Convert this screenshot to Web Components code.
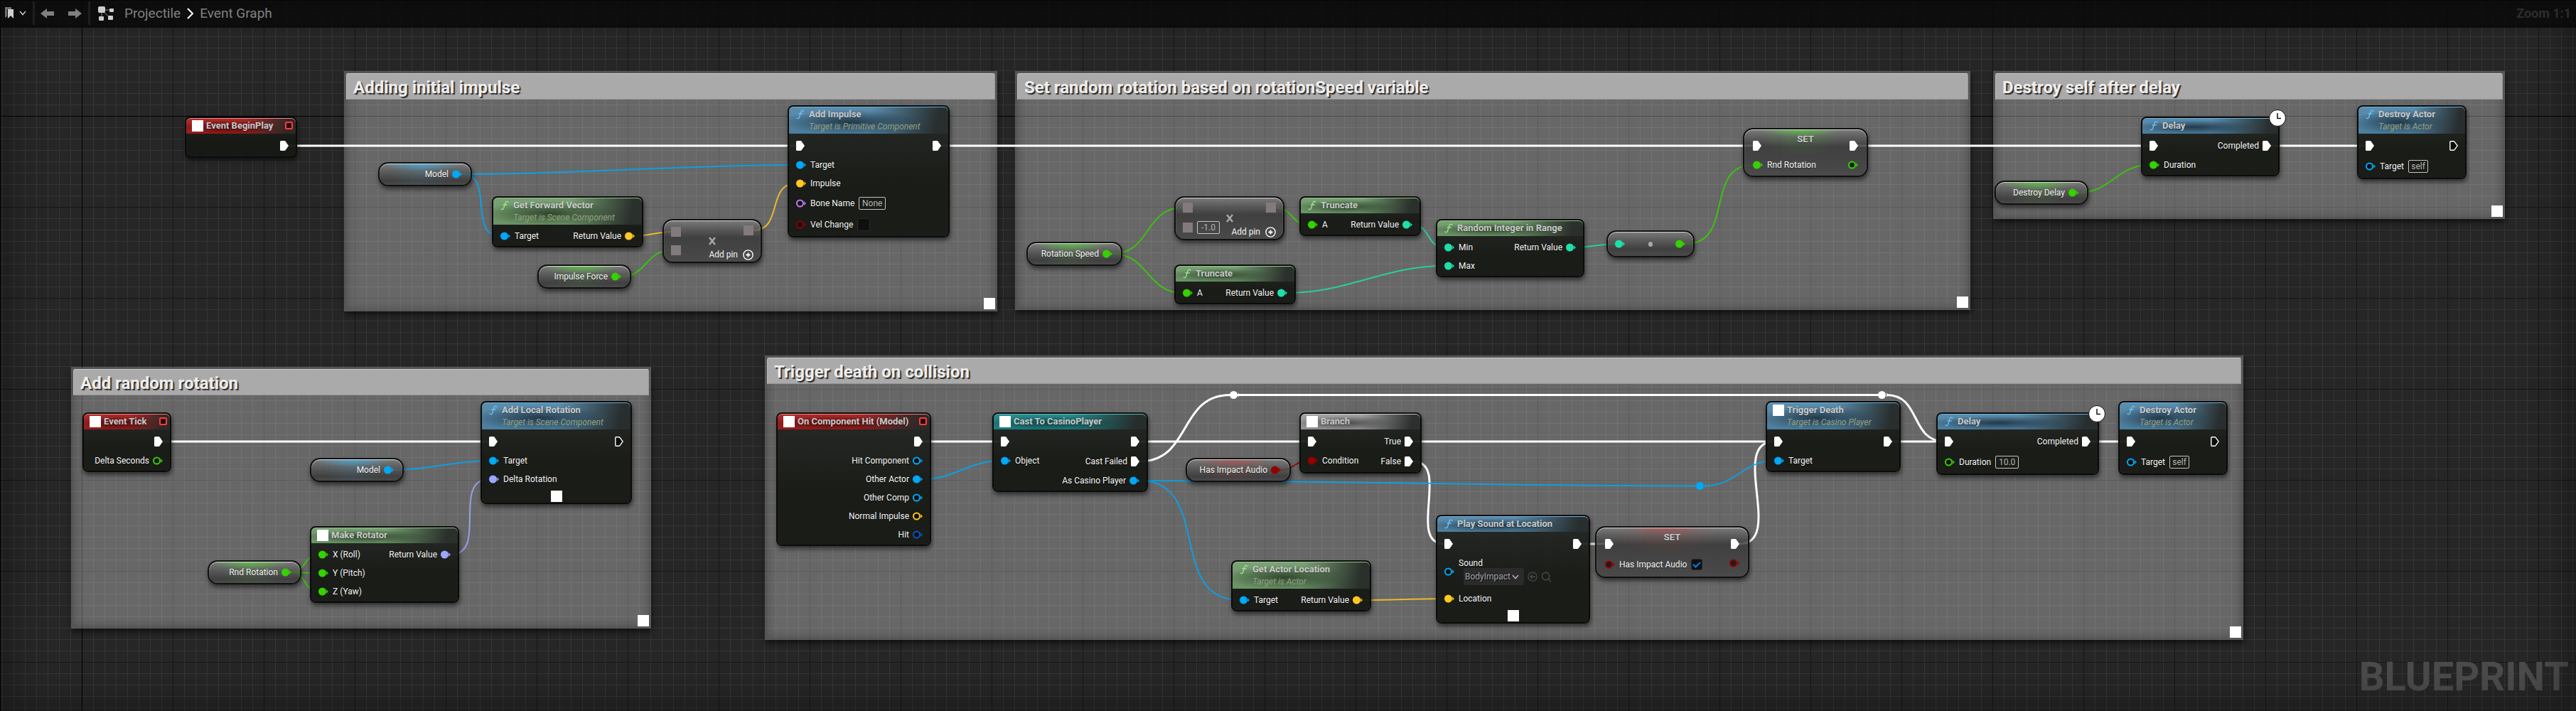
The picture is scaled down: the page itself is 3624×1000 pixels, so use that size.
<!DOCTYPE html>
<html lang="en">
<head>
<meta charset="utf-8">
<title>Projectile - Event Graph</title>
<style>
  html, body { margin: 0; height: 100%; }
  body { background: #262626; color: #f0f0f0; font: 12px/14px Roboto, "Liberation Sans", sans-serif; overflow: hidden; }
</style>
</head>
<body>

<bp-editor>
  <bp-toolbar slot="bar"></bp-toolbar>

  <bp-comment heading="Adding initial impulse" style="left:484px;top:100px;width:919px;height:338px"></bp-comment>
  <bp-comment heading="Set random rotation based on rotationSpeed variable" style="left:1428px;top:100px;width:1344px;height:336px"></bp-comment>
  <bp-comment heading="Destroy self after delay" style="left:2804px;top:100px;width:720px;height:208px"></bp-comment>
  <bp-comment heading="Add random rotation" style="left:100px;top:516px;width:816px;height:368px"></bp-comment>
  <bp-comment heading="Trigger death on collision" style="left:1076px;top:500px;width:2080px;height:400px"></bp-comment>

  <bp-wires></bp-wires>

  <bp-knot tone="exec" style="left:1730px;top:549px"></bp-knot>
  <bp-knot tone="exec" style="left:2642px;top:549px"></bp-knot>
  <bp-knot tone="object" style="left:2386px;top:677px"></bp-knot>

  <bp-node tone="red" icon="square" delegate heading="Event BeginPlay" style="left:260px;top:164px;width:158px">
    <bp-pin slot="out" type="exec" linked></bp-pin>
  </bp-node>

  <bp-getter tone="object" style="left:532px;top:228px;width:132px"><bp-pin slot="out" type="object" linked>Model</bp-pin></bp-getter>

  <bp-node tone="green" icon="fn" heading="Get Forward Vector" sub="Target is Scene Component" style="left:692px;top:276px;width:213px">
    <bp-pin slot="in" type="object" linked>Target</bp-pin>
    <bp-pin slot="out" type="vector" linked>Return Value</bp-pin>
  </bp-node>

  <bp-getter tone="float" style="left:756px;top:372px;width:132px"><bp-pin slot="out" type="float" linked>Impulse Force</bp-pin></bp-getter>

  <bp-operator style="left:932px;top:308px;width:140px">
    <bp-pin slot="in" type="wild"></bp-pin>
    <bp-pin slot="in" type="wild"></bp-pin>
    <bp-pin slot="out" type="wild"></bp-pin>
  </bp-operator>

  <bp-node tone="blue" icon="fn" heading="Add Impulse" sub="Target is Primitive Component" style="left:1108px;top:148px;width:228px">
    <bp-pin slot="in" type="exec" linked></bp-pin>
    <bp-pin slot="in" type="object" linked>Target</bp-pin>
    <bp-pin slot="in" type="vector" linked>Impulse</bp-pin>
    <bp-pin slot="in" type="name" field="None" size="38">Bone Name</bp-pin>
    <bp-pin slot="in" type="bool" check="18">Vel Change</bp-pin>
    <bp-pin slot="out" type="exec" linked></bp-pin>
  </bp-node>

  <bp-getter tone="float" style="left:1444px;top:340px;width:135px"><bp-pin slot="out" type="float" linked>Rotation Speed</bp-pin></bp-getter>

  <bp-operator style="left:1652px;top:276px;width:155px">
    <bp-pin slot="in" type="wild"></bp-pin>
    <bp-pin slot="in" type="wild" field="-1.0" size="32"></bp-pin>
    <bp-pin slot="out" type="wild"></bp-pin>
  </bp-operator>

  <bp-node tone="green" icon="fn" heading="Truncate" style="left:1828px;top:276px;width:171px">
    <bp-pin slot="in" type="float" linked>A</bp-pin>
    <bp-pin slot="out" type="int" linked>Return Value</bp-pin>
  </bp-node>
  <bp-node tone="green" icon="fn" heading="Truncate" style="left:1652px;top:372px;width:171px">
    <bp-pin slot="in" type="float" linked>A</bp-pin>
    <bp-pin slot="out" type="int" linked>Return Value</bp-pin>
  </bp-node>

  <bp-node tone="green" icon="fn" heading="Random Integer in Range" style="left:2020px;top:308px;width:209px">
    <bp-pin slot="in" type="int" linked>Min</bp-pin>
    <bp-pin slot="in" type="int" linked>Max</bp-pin>
    <bp-pin slot="out" type="int" linked>Return Value</bp-pin>
  </bp-node>

  <bp-convert style="left:2260px;top:324px;width:124px">
    <bp-pin slot="in" type="int" linked></bp-pin>
    <bp-pin slot="out" type="float" linked></bp-pin>
  </bp-convert>

  <bp-setter tone="float" style="left:2452px;top:180px;width:176px">
    <bp-pin slot="in" type="exec" linked></bp-pin>
    <bp-pin slot="in" type="float" linked>Rnd Rotation</bp-pin>
    <bp-pin slot="out" type="exec" linked></bp-pin>
    <bp-pin slot="out" type="float"></bp-pin>
  </bp-setter>

  <bp-getter tone="float" style="left:2806px;top:254px;width:132px"><bp-pin slot="out" type="float" linked>Destroy Delay</bp-pin></bp-getter>

  <bp-node tone="blue" icon="fn" latent heading="Delay" style="left:3012px;top:164px;width:195px">
    <bp-pin slot="in" type="exec" linked></bp-pin>
    <bp-pin slot="in" type="float" linked>Duration</bp-pin>
    <bp-pin slot="out" type="exec" linked>Completed</bp-pin>
  </bp-node>

  <bp-node tone="blue" icon="fn" heading="Destroy Actor" sub="Target is Actor" style="left:3316px;top:148px;width:154px">
    <bp-pin slot="in" type="exec" linked></bp-pin>
    <bp-pin slot="in" type="object" field="self" size="28">Target</bp-pin>
    <bp-pin slot="out" type="exec"></bp-pin>
  </bp-node>

  <bp-node tone="red" icon="square" delegate heading="Event Tick" style="left:116px;top:580px;width:125px">
    <bp-pin slot="out" type="exec" linked></bp-pin>
    <bp-pin slot="out" type="float">Delta Seconds</bp-pin>
  </bp-node>

  <bp-getter tone="object" style="left:436px;top:644px;width:132px"><bp-pin slot="out" type="object" linked>Model</bp-pin></bp-getter>
  <bp-getter tone="float" style="left:292px;top:788px;width:132px"><bp-pin slot="out" type="float" linked>Rnd Rotation</bp-pin></bp-getter>

  <bp-node tone="green" icon="square" heading="Make Rotator" style="left:436px;top:740px;width:210px">
    <bp-pin slot="in" type="float" linked>X (Roll)</bp-pin>
    <bp-pin slot="in" type="float" linked>Y (Pitch)</bp-pin>
    <bp-pin slot="in" type="float" linked>Z (Yaw)</bp-pin>
    <bp-pin slot="out" type="rotator" linked>Return Value</bp-pin>
  </bp-node>

  <bp-node tone="blue" icon="fn" expand heading="Add Local Rotation" sub="Target is Scene Component" style="left:676px;top:564px;width:213px">
    <bp-pin slot="in" type="exec" linked></bp-pin>
    <bp-pin slot="in" type="object" linked>Target</bp-pin>
    <bp-pin slot="in" type="rotator" linked>Delta Rotation</bp-pin>
    <bp-pin slot="out" type="exec"></bp-pin>
  </bp-node>

  <bp-node tone="red" icon="square" delegate heading="On Component Hit (Model)" style="left:1092px;top:580px;width:218px">
    <bp-pin slot="out" type="exec" linked></bp-pin>
    <bp-pin slot="out" type="object">Hit Component</bp-pin>
    <bp-pin slot="out" type="object" linked>Other Actor</bp-pin>
    <bp-pin slot="out" type="object">Other Comp</bp-pin>
    <bp-pin slot="out" type="vector">Normal Impulse</bp-pin>
    <bp-pin slot="out" type="struct">Hit</bp-pin>
  </bp-node>

  <bp-node tone="teal" icon="square" heading="Cast To CasinoPlayer" style="left:1396px;top:580px;width:219px">
    <bp-pin slot="in" type="exec" linked></bp-pin>
    <bp-pin slot="in" type="object" linked>Object</bp-pin>
    <bp-pin slot="out" type="exec" linked></bp-pin>
    <bp-pin slot="out" type="exec" linked>Cast Failed</bp-pin>
    <bp-pin slot="out" type="object" linked>As Casino Player</bp-pin>
  </bp-node>

  <bp-getter tone="bool" style="left:1668px;top:644px;width:148px"><bp-pin slot="out" type="bool" linked>Has Impact Audio</bp-pin></bp-getter>

  <bp-node tone="gray" icon="square" heading="Branch" style="left:1828px;top:580px;width:172px">
    <bp-pin slot="in" type="exec" linked></bp-pin>
    <bp-pin slot="in" type="bool" linked>Condition</bp-pin>
    <bp-pin slot="out" type="exec" linked>True</bp-pin>
    <bp-pin slot="out" type="exec" linked>False</bp-pin>
  </bp-node>

  <bp-node tone="green" icon="fn" heading="Get Actor Location" sub="Target is Actor" style="left:1732px;top:788px;width:197px">
    <bp-pin slot="in" type="object" linked>Target</bp-pin>
    <bp-pin slot="out" type="vector" linked>Return Value</bp-pin>
  </bp-node>

  <bp-node tone="blue" icon="fn" expand heading="Play Sound at Location" style="left:2020px;top:724px;width:217px">
    <bp-pin slot="in" type="exec" linked></bp-pin>
    <bp-pin slot="in" type="object" asset="BodyImpact">Sound</bp-pin>
    <bp-pin slot="in" type="vector" linked>Location</bp-pin>
    <bp-pin slot="out" type="exec" linked></bp-pin>
  </bp-node>

  <bp-setter tone="bool" style="left:2244px;top:740px;width:217px">
    <bp-pin slot="in" type="exec" linked></bp-pin>
    <bp-pin slot="in" type="bool" check="16" on>Has Impact Audio</bp-pin>
    <bp-pin slot="out" type="exec" linked></bp-pin>
    <bp-pin slot="out" type="bool"></bp-pin>
  </bp-setter>

  <bp-node tone="blue" icon="square" heading="Trigger Death" sub="Target is Casino Player" style="left:2484px;top:564px;width:190px">
    <bp-pin slot="in" type="exec" linked></bp-pin>
    <bp-pin slot="in" type="object" linked>Target</bp-pin>
    <bp-pin slot="out" type="exec" linked></bp-pin>
  </bp-node>

  <bp-node tone="blue" icon="fn" latent heading="Delay" style="left:2724px;top:580px;width:229px">
    <bp-pin slot="in" type="exec" linked></bp-pin>
    <bp-pin slot="in" type="float" field="10.0" size="33">Duration</bp-pin>
    <bp-pin slot="out" type="exec" linked>Completed</bp-pin>
  </bp-node>

  <bp-node tone="blue" icon="fn" heading="Destroy Actor" sub="Target is Actor" style="left:2980px;top:564px;width:154px">
    <bp-pin slot="in" type="exec" linked></bp-pin>
    <bp-pin slot="in" type="object" field="self" size="28">Target</bp-pin>
    <bp-pin slot="out" type="exec"></bp-pin>
  </bp-node>
</bp-editor>

<script>
const COLORS = {
  exec: '#ffffff', object: '#00a8f6', vector: '#ffc823', float: '#35d100', int: '#1fdfa8',
  bool: '#940000', rotator: '#9ba8ff', name: '#c67bff', struct: '#0058c8', wild: '#837b7b'
};

class BpElement extends HTMLElement {
  connectedCallback() {
    if (this.shadowRoot) return;
    this.attachShadow({ mode: 'open' }).innerHTML =
      `<style>*{box-sizing:border-box}${this.css()}</style>${this.html()}`;
  }
  css() { return ''; }
  html() { return ''; }
}

/* Canvas with the ruled background: 16px cells, heavier rules each 8 cells, black axes through the origin */
class BpEditor extends BpElement {
  css() { return `
    :host { display: block; position: relative; min-height: 100vh; overflow: hidden;
      background-color: #262626;
      background-image:
        linear-gradient(90deg, #000 1px, transparent 1px), linear-gradient(#000 1px, transparent 1px),
        linear-gradient(90deg, #161616 1px, transparent 1px), linear-gradient(#161616 1px, transparent 1px),
        linear-gradient(90deg, #353535 1px, transparent 1px), linear-gradient(#353535 1px, transparent 1px);
      background-size: 100% 100%, 100% 100%, 128px 128px, 128px 128px, 16px 16px, 16px 16px;
      background-repeat: no-repeat, no-repeat, repeat, repeat, repeat, repeat;
      background-position: 0 0, 0 0, 115px 35px, 115px 35px, 3px 3px, 3px 3px;
      background-origin: padding-box; }
    .axis { position: absolute; background: #000; }
    .ax { left: 0; right: 0; top: 163px; height: 1px; }
    .ay { top: 0; bottom: 0; left: 115px; width: 1px; }
    .mark { position: absolute; right: 10px; bottom: 15px; font: bold 56px/66px Roboto, sans-serif; color: #4b4b4b; }
    .vignette { position: absolute; inset: 0; pointer-events: none; box-shadow: inset 0 0 60px rgba(0,0,0,.45); }`; }
  html() { return `<div class="axis ax"></div><div class="axis ay"></div><slot></slot><div class="mark">BLUEPRINT</div><div class="vignette"></div><slot name="bar"></slot>`; }
}
customElements.define('bp-editor', BpEditor);

class BpToolbar extends BpElement {
  css() { return `
    :host { position: absolute; top: 0; left: 0; right: 0; height: 37px; display: flex; align-items: center;
      padding: 0 7px; background: rgba(8,8,8,.78); border-bottom: 2px solid #0b0b0b; font-size: 19px; line-height: 24px; }
    button { all: unset; display: flex; align-items: center; }
    .marks { gap: 8px; width: 39px; height: 100%; }
    i { width: 3px; height: 33px; background: #1e1e1e; }
    .nav { display: flex; gap: 20px; padding: 0 9px 0 8px; }
    nav { display: flex; align-items: center; gap: 9px; padding-left: 11px; flex: 1; }
    nav > svg:first-child { margin-right: 6px; }
    a { color: #808080; text-decoration: none; }
    .zoom { font-weight: bold; font-size: 18px; color: #2d2d2d; }`; }
  html() { return `
    <button class="marks" aria-label="Bookmarks">
      <svg width="12" height="17"><path d="M0 0H9V3H3V13L0 15Z" fill="#6e6e6e"/><path d="M4 3H12V16L8 12L4 16Z" fill="#cfcfcf"/></svg>
      <svg width="10" height="7"><path d="M1 1L5 5.500L9 1" fill="none" stroke="#c8c8c8" stroke-width="1.500"/></svg>
    </button><i></i>
    <div class="nav">
      <button aria-label="Back"><svg width="19" height="16"><path d="M0 8L9 1V5H19V11H9V15Z" fill="#808080"/></svg></button>
      <button aria-label="Forward"><svg width="19" height="16"><path d="M19 8L10 1V5H0V11H10V15Z" fill="#808080"/></svg></button>
    </div><i></i>
    <nav aria-label="Breadcrumb">
      <svg width="22" height="20"><path d="M5 5V17M5 5H18M5 5L17 16" stroke="#8a8a8a" fill="none"/><g fill="#cdcdcd"><rect width="10" height="9" rx="2"/><rect x="16" y="3" width="6" height="5" rx="1"/><rect x="1" y="14" width="7" height="6" rx="1"/><rect x="14" y="13" width="7" height="6" rx="1"/></g></svg>
      <a href="#projectile">Projectile</a>
      <svg width="9" height="16"><path d="M1 1L8 8L1 15" fill="none" stroke="#fff" stroke-width="2"/></svg>
      <a href="#graph">Event Graph</a>
    </nav>
    <span class="zoom">Zoom 1:1</span>`; }
}
customElements.define('bp-toolbar', BpToolbar);

class BpComment extends BpElement {
  css() { return `
    :host { position: absolute; display: flex; flex-direction: column; justify-content: space-between; box-sizing: border-box;
      border: 3px solid rgba(30,30,30,.25); background: rgba(255,255,255,.3);
      box-shadow: inset 0 0 14px rgba(0,0,0,.25), 1px 5px 7px rgba(0,0,0,.5); }
    h2 { margin: 0; padding: 2px 9px 0; height: 37px; font: bold 24px/35px Roboto, sans-serif; color: #eee;
      text-shadow: 2px 2px 1px #2c2c2c; background: #aaa; border: 1px solid #c4c4c4;
      border-color: #ccc #999 #989898 #bbb; border-radius: 3px 3px 0 0; }
    span { align-self: flex-end; width: 16px; height: 16px; background: #fff; }`; }
  html() { return `<h2>${this.getAttribute('heading')}</h2><span></span>`; }
}
customElements.define('bp-comment', BpComment);

class BpWires extends BpElement {
  css() { return `:host { position: absolute; inset: 0; pointer-events: none; } svg { display: block; width: 100%; height: 100%; overflow: visible; }`; }
  html() {
    const W = [
      ['exec', 406, 205, 1120, 205], ['exec', 1324, 205, 2466, 205], ['exec', 2613, 205, 3024, 205], ['exec', 3195, 205, 3328, 205],
      ['exec', 229, 621, 688, 621], ['exec', 1298, 621, 1408, 621], ['exec', 1603, 621, 1840, 621],
      ['exec', 1603, 649, 1731, 555.5], ['exec', 1740, 555.5, 2642, 555.5], ['exec', 2654, 555.5, 2736, 621],
      ['exec', 1988, 621, 2496, 621], ['exec', 1988, 649, 2032, 765], ['exec', 2225, 765, 2258, 765],
      ['exec', 2447, 765, 2496, 621], ['exec', 2662, 621, 2736, 621], ['exec', 2941, 621, 2992, 621],
      ['object', 650, 245, 1120, 232], ['object', 650, 245, 704, 332], ['object', 554, 661, 688, 648],
      ['object', 1298, 674, 1408, 648], ['object', 1603, 676, 2388, 683.5], ['object', 2398, 683.5, 2496, 648], ['object', 1603, 676, 1744, 844],
      ['vector', 893, 332, 944, 326], ['vector', 1060, 324, 1120, 258], ['vector', 1917, 844, 2032, 842],
      ['float', 874, 389, 944, 352], ['float', 1565, 357, 1664, 292], ['float', 1565, 357, 1664, 412], ['float', 1795, 292, 1840, 316],
      ['float', 2924, 271, 3024, 232], ['float', 2372, 343, 2466, 232],
      ['float', 410, 805, 448, 780], ['float', 410, 805, 448, 806], ['float', 410, 805, 448, 832],
      ['int', 1987, 316, 2032, 348], ['int', 1811, 412, 2032, 374], ['int', 2217, 348, 2272, 343],
      ['bool', 1802, 661, 1840, 648], ['rotator', 634, 780, 688, 674]
    ];
    return '<svg fill="none">' + W.map(([t, a, b, c, d]) => {
      const h = (Math.abs(c - a) + Math.abs(d - b)) / 3;
      return `<path d="M${a} ${b}C${a + h} ${b} ${c - h} ${d} ${c} ${d}" stroke="${COLORS[t]}" stroke-width="${t === 'exec' ? 3 : 2}" opacity="${t === 'exec' ? 1 : .85}"/>`;
    }).join('') + '</svg>';
  }
}
customElements.define('bp-wires', BpWires);

class BpKnot extends BpElement {
  css() { return `:host { position: absolute; display: block; height: 13px; } svg { display: block; }`; }
  html() { return `<svg width="15" height="13" fill="${COLORS[this.getAttribute('tone')]}"><circle cx="5.500" cy="6.500" r="5.500"/><path d="M12 3.500L14.500 6.500L12 9.500Z"/></svg>`; }
}
customElements.define('bp-knot', BpKnot);

/* One pin row: glyph, label and, when unconnected, its default value control */
class BpPin extends BpElement {
  css() {
    const exec = this.getAttribute('type') === 'exec';
    const h = exec ? 28 : this.hasAttribute('asset') ? 50 : this.hasAttribute('field') || this.hasAttribute('check') ? 30 : 26;
    const out = this.getAttribute('slot') === 'out';
    return `
    :host { display: flex; flex-direction: ${out ? 'row-reverse' : 'row'}; align-items: center; height: ${h}px; gap: ${out ? 5 : 6}px; white-space: nowrap; }
    svg { display: block; flex: none; }
    label { display: block; line-height: 14px; padding-bottom: 1px; color: #f4f4f4; text-shadow: 0 1px 1px rgba(0,0,0,.5); }
    label:empty { display: none; }
    .text { height: 18px; width: ${this.getAttribute('size')}px; border: 1px solid #c4c4c4; border-radius: 2px; background: transparent;
      color: #b4b4b4; font: 12px/14px Roboto, sans-serif; padding: 0; text-align: center; outline: 0; }
    .box { appearance: none; margin: 0; width: ${this.getAttribute('check')}px; height: ${this.getAttribute('check')}px; border: 1px solid #2a2a2a; border-radius: 3px; background: #0f0f0f; display: grid; place-items: center; }
    .box:checked::after { content: ""; width: 8px; height: 4px; border: solid #0a7cf5; border-width: 0 0 2px 2px; transform: translateY(-1px) rotate(-45deg); }
    .col { display: flex; flex-direction: column; }
    .col label { padding: 0; }
    .pick { display: flex; align-items: center; gap: 5px; padding-left: 7px; }
    .sel { display: flex; align-items: center; width: 85px; height: 24px; border-radius: 3px; background: #2b2b2b; }
    select { appearance: none; border: 0; background: none; color: #a8a8a8; font: 12px/16px Roboto, sans-serif; text-shadow: 1px 1px 0 #000; padding: 0 0 0 2px; width: 68px; outline: 0; }
    button { all: unset; display: block; }`;
  }
  glyph() {
    const t = this.getAttribute('type'), c = COLORS[t], on = this.hasAttribute('linked');
    if (t === 'wild') return `<svg width="14" height="14"><rect width="14" height="14" fill="${c}"/></svg>`;
    if (t === 'exec') return on
      ? `<svg width="12" height="14"><path d="M1.500 0H6.200Q7 0 7.600 .7L12 7L7.600 13.300Q7 14 6.200 14H1.500Q0 14 0 12.500V1.500Q0 0 1.500 0Z" fill="#fff"/></svg>`
      : `<svg width="12" height="14"><path d="M1.700 .8H5.800Q6.500 .8 7 1.400L11.200 7L7 12.600Q6.500 13.200 5.800 13.200H1.700Q.8 13.200 .8 12.300V1.700Q.8 .8 1.700 .8Z" fill="#0b0b0b" stroke="#fff" stroke-width="1.400"/></svg>`;
    return `<svg width="14" height="12">${on ? `<circle cx="5.500" cy="6" r="5.500" fill="${c}"/>` : `<circle cx="5.500" cy="6" r="4.500" fill="rgba(10,10,10,.7)" stroke="${c}" stroke-width="2"/>`}<path d="M11 3Q12 6 11 9L14 6Z" fill="${c}"/></svg>`;
  }
  html() {
    const label = this.textContent ? '<label for="v"><slot></slot></label>' : '';
    if (this.hasAttribute('asset')) return `${this.glyph()}<div class="col">${label}<div class="pick">
      <span class="sel"><select id="v"><option>${this.getAttribute('asset')}</option></select><svg width="10" height="7"><path d="M1 1L5 5.500L9 1" fill="none" stroke="#b0b0b0" stroke-width="1.600"/></svg></span>
      <button aria-label="Use selected"><svg width="14" height="14" fill="none" stroke="#4a4a4a" stroke-width="1.300"><circle cx="7" cy="7" r="6.200"/><path d="M11 7H4M7 4L4 7L7 10"/></svg></button>
      <button aria-label="Browse"><svg width="15" height="15" fill="none" stroke="#4a4a4a" stroke-width="1.400"><circle cx="6.500" cy="6.500" r="5.200"/><path d="M10.500 10.500L14 14"/></svg></button></div></div>`;
    let field = '';
    if (this.hasAttribute('field')) field = `<input class="text" id="v" aria-label="Value" value="${this.getAttribute('field')}">`;
    if (this.hasAttribute('check')) field = `<input class="box" id="v" type="checkbox"${this.hasAttribute('on') ? ' checked' : ''}>`;
    return this.glyph() + label + field;
  }
}
customElements.define('bp-pin', BpPin);

const TONES = {
  red: ['#a01c1c', '#4a0c0c', '#ff8080', '#ff9090'],
  green: ['#6f9a6a', '#2f472d', '#93c48c', '#a2ea93'],
  blue: ['#4f84a6', '#22394a', '#69b0e2', '#70c4fb'],
  teal: ['#1c8083', '#0d4446', '#58c0c2', '#70e0e0'],
  gray: ['#9a9a9a', '#4c4c4c', '#c8c8c8', '#ddd']
};

class BpNode extends BpElement {
  css() {
    const [c, d, e, f] = TONES[this.getAttribute('tone')];
    return `
    :host { position: absolute; display: block; box-sizing: border-box; border: 2px solid #0a0b0a; border-radius: 8px;
      background: linear-gradient(rgba(34,37,33,.93), rgba(22,24,20,.95) 60%); background-clip: padding-box; box-shadow: 1px 4px 6px rgba(0,0,0,.55); }
    header { display: flex; padding-left: 8px; border-radius: 6px 6px 0 0; box-shadow: inset 0 1px 0 ${e};
      background:
        radial-gradient(ellipse 45% 45% at 38% 58%, ${d}, transparent),
        linear-gradient(100deg, transparent 50%, rgba(38,42,40,.95) 92%),
        linear-gradient(rgba(255,255,255,.08), rgba(0,0,0,.05)), ${c}; }
    .icon { width: 16px; height: 16px; margin: 3px 4px 0 0; flex: none; }
    .square { background: #fff; }
    .t { flex: 1; }
    h3 { margin: 0; font: bold 13px/22px Roboto, sans-serif; color: #cacaca; text-shadow: 0 1px 1px rgba(0,0,0,.4); white-space: nowrap; }
    p { margin: 0; font: italic 12px/12px Roboto, sans-serif; padding-bottom: 4px; color: #949f7e; white-space: nowrap; }
    .del { width: 11px; height: 11px; margin: 5px 4px 0 0; border: 2px solid #ff3a3a; border-radius: 2px; background: #2a0808; }
    main { display: flex; justify-content: space-between; padding: 3px 10px 1px; }
    .out { display: flex; flex-direction: column; }
    .more { display: flex; justify-content: center; padding-top: 2px; height: 19px; }
    .more button { all: unset; width: 16px; height: 16px; background: #fff; }
    .clock { position: absolute; right: -11px; top: -12px; }
    .fn path { stroke: ${f}; }`;
  }
  html() {
    const has = n => this.hasAttribute(n), at = n => this.getAttribute(n);
    const icon = at('icon') === 'square' ? '<span class="icon square"></span>'
      : '<svg class="icon fn" viewBox="0 0 16 16" fill="none"><path d="M13 3.200C11.200 1.800 9.400 2.200 8.800 4.600L6.600 11.600C6 13.800 4.600 14.200 3 13M5.800 6.800H11.200" stroke-width="1.300" stroke-linecap="round"/></svg>';
    return `<header>${icon}<div class="t"><h3>${at('heading')}</h3>${has('sub') ? `<p>${at('sub')}</p>` : ''}</div>${has('delegate') ? '<span class="del"></span>' : ''}</header>
      <main><div class="in"><slot name="in"></slot></div><div class="out"><slot name="out"></slot></div></main>
      ${has('expand') ? '<div class="more"><button aria-label="Advanced"></button></div>' : ''}
      ${has('latent') ? '<svg class="clock" width="24" height="24"><circle cx="12" cy="12" r="11.500" fill="#fff" stroke="#0a0a0a"/><path d="M12 5V12.500H17" fill="none" stroke="#111" stroke-width="1.500"/></svg>' : ''}`;
  }
}
customElements.define('bp-node', BpNode);

/* rgb and strength of the highlight at the top of a capsule */
const GLOW = { object: ['64,180,236', .65], float: ['90,215,60', .6], bool: ['200,60,60', .42] };
const shell = tone => {
  const [rgb, a] = GLOW[tone] || [];
  return `
  :host { position: absolute; display: grid; box-sizing: border-box; border: 2px solid #101010; border-radius: 14px;
    background: ${rgb ? `radial-gradient(ellipse 90px 16px at 46% 0, rgba(${rgb},${a}), transparent 65%), radial-gradient(ellipse 34% 30px at 46% 8px, rgba(${rgb},.16), transparent),` : ''}
      linear-gradient(rgba(130,130,130,.7), rgba(80,80,80,.76) 14px, rgba(56,56,56,.84) 24px, rgba(68,68,68,.84));
    background-clip: padding-box; box-shadow: inset 0 1px 1px rgba(255,255,255,.7), 1px 4px 6px rgba(0,0,0,.55); }`;
};

class BpGetter extends BpElement {
  css() { return shell(this.getAttribute('tone')) + `:host { height: 34px; } div { display: flex; justify-content: flex-end; align-items: center; padding-right: 12px; }`; }
  html() { return `<div><slot name="out"></slot></div>`; }
}
customElements.define('bp-getter', BpGetter);

class BpSetter extends BpElement {
  css() { return shell(this.getAttribute('tone')) + `
    h3 { margin: 0; grid-area: 1/1; text-align: center; font: bold 13px/28px Roboto, sans-serif; color: #c8c8c8; text-shadow: 0 1px 1px rgba(0,0,0,.5); }
    main { grid-area: 1/1; display: flex; justify-content: space-between; padding: 9px 12px 2px; }
    .out { display: flex; flex-direction: column; }`; }
  html() { return `<h3>SET</h3><main><div><slot name="in"></slot></div><div class="out"><slot name="out"></slot></div></main>`; }
}
customElements.define('bp-setter', BpSetter);

class BpOperator extends BpElement {
  css() { return shell() + `
    :host { height: 62px; }
    b { grid-area: 1/1; place-self: center; }
    b svg { display: block; }
    main { grid-area: 1/1; display: flex; justify-content: space-between; align-items: center; padding: 0 10px; }
    .out { align-self: stretch; display: flex; flex-direction: column; justify-content: space-between; padding: 1px 0; }
    button { all: unset; display: flex; align-items: center; gap: 7px; height: 18px; color: #f2f2f2; white-space: nowrap; }`; }
  html() { return `<b><svg width="12" height="12"><path d="M2 1L10 11M10 1L2 11" stroke="#a6a6a6" stroke-width="2.600"/></svg></b>
    <main><div><slot name="in"></slot></div><div class="out"><slot name="out"></slot>
    <button>Add pin <svg width="15" height="15" fill="none" stroke="#fff" stroke-width="1.400"><circle cx="7.500" cy="7.500" r="6.600"/><path d="M7.500 4.500V10.500M4.500 7.500H10.500" stroke-width="1.800"/></svg></button></div></main>`; }
}
customElements.define('bp-operator', BpOperator);

class BpConvert extends BpElement {
  css() { return shell() + `
    :host { height: 38px; }
    main { display: flex; justify-content: space-between; align-items: center; padding: 0 11px 0 10px; }
    i { width: 6px; height: 7px; border-radius: 3px; background: #a8a8a8; }`; }
  html() { return `<main><slot name="in"></slot><i></i><slot name="out"></slot></main>`; }
}
customElements.define('bp-convert', BpConvert);
</script>
</body>
</html>
